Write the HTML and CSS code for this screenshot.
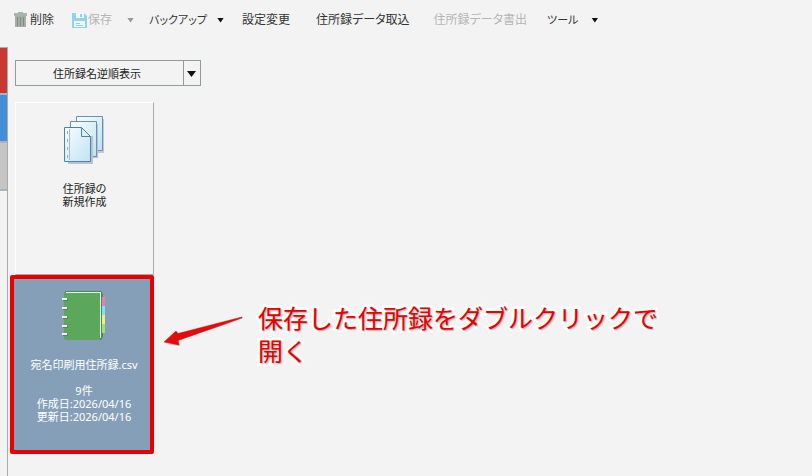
FILE: index.html
```html
<!DOCTYPE html>
<html lang="ja">
<head>
<meta charset="utf-8">
<title>住所録</title>
<link rel="stylesheet" href="styles.css">
</head>
<body>
<div class="app">
  <header class="toolbar">
    <button class="tool tool-delete" type="button">
      <svg class="icon-trash" viewBox="0 0 14 16" aria-hidden="true">
        <path d="M0 1h4V0h5v1h4v3H0z" fill="#a9b5aa"/>
        <path d="M1 4h11v11H1z" fill="#a3aea4"/>
        <path d="M3.500 5v9M6.500 5v9M9.500 5v9" stroke="#7f8b83" stroke-width="1"/>
      </svg>
      <span>削除</span>
    </button>
    <button class="tool tool-save" type="button" disabled>
      <svg class="icon-save" viewBox="0 0 15 15" aria-hidden="true">
        <path d="M0 0h12l3 3v12H0z" fill="#8fd4ea"/>
        <path d="M4 0h8v5H4zM2 8h11v6H2z" fill="#f3f8f9"/>
        <path d="M8 1h2v3H8zM4 10h4v1H4zM4 12h7v1H4z" fill="#8fd4ea"/>
      </svg>
      <span>保存</span>
    </button>
    <button class="drop drop-save" type="button" disabled aria-label="保存メニュー"></button>
    <button class="tool tool-kana tool-backup" type="button">バックアップ</button>
    <button class="drop drop-backup" type="button" aria-label="バックアップメニュー"></button>
    <button class="tool tool-settings" type="button">設定変更</button>
    <button class="tool tool-import" type="button">住所録データ取込</button>
    <button class="tool tool-export" type="button" disabled>住所録データ書出</button>
    <button class="tool tool-kana tool-tools" type="button">ツール</button>
    <button class="drop drop-tools" type="button" aria-label="ツールメニュー"></button>
  </header>
  <div class="body">
    <nav class="rail" aria-label="タブ">
      <span class="tab tab-red"></span>
      <span class="tab tab-blue"></span>
      <span class="tab tab-gray"></span>
    </nav>
    <main class="content">
      <div class="sort">
        <select class="sort-select" aria-label="並び順">
          <option>住所録名逆順表示</option>
        </select>
      </div>
      <div class="board">
        <div class="cards">
          <button class="card card-new" type="button">
            <svg class="icon-pages" viewBox="0 0 42 50" aria-hidden="true">
              <defs>
                <linearGradient id="paper" x1="0" y1="0" x2="1" y2="1">
                  <stop offset="0" stop-color="#fafdff"/>
                  <stop offset="1" stop-color="#bfe2f2"/>
                </linearGradient>
              </defs>
              <path d="M15 3h25v34H15z" fill="#c4cace"/>
              <path d="M12.500 .5h26v34h-26z" fill="url(#paper)" stroke="#6591ba"/>
              <path d="M9 8h25v34H9z" fill="#b5c4cf"/>
              <path d="M6.500 5.500h26v35h-26z" fill="url(#paper)" stroke="#6591ba"/>
              <path d="M4 20h25v28H4z" fill="#b5c4cf"/>
              <path d="M.5 11.500h17l9 9v25H.5z" fill="url(#paper)" stroke="#4f80b4"/>
              <path d="M17.500 11.500v9h9z" fill="#d9f0fa" stroke="#4f80b4"/>
              <path d="M5.500 13v31" stroke="#9dbbd6"/>
              <path d="M3.500 15v29" stroke="#8fb0cf" stroke-dasharray="3 5"/>
            </svg>
            <span class="card-text">住所録の<br>新規作成</span>
          </button>
          <button class="card card-book" type="button">
            <svg class="icon-book" viewBox="0 0 44 50" aria-hidden="true">
              <path d="M4 0h35l2 3v43l-2 3H4l-2-2V2z" fill="#458c50"/>
              <path d="M4 1h35v46H4z" fill="#edf5e9"/>
              <path d="M4 2h34v47H4l-2-2V2z" fill="#5ba75c"/>
              <path d="M40 6h3v9h-3z" fill="#f17aae"/>
              <path d="M40 15h3v9h-3z" fill="#7be2fa"/>
              <path d="M40 24h3v9h-3z" fill="#f5ed79"/>
              <path d="M40 33h3v9h-3z" fill="#a7dd78"/>
              <path d="M1 9h5M1 18h5M1 27h5M1 36h5M1 44h5" stroke="#69756c" stroke-width="2"/>
              <path d="M0 8h5M0 17h5M0 26h5M0 35h5M0 43h5" stroke="#f0f0ea" stroke-width="2"/>
            </svg>
            <span class="card-text">宛名印刷用住所録.csv<br><br>9件<br>作成日:2026/04/16<br>更新日:2026/04/16</span>
          </button>
        </div>
        <div class="note">
          <svg class="note-arrow" viewBox="0 0 82 34" aria-hidden="true">
            <path d="M80 3L16 21l1 9L3 28z" fill="#999" opacity=".5"/>
            <path d="M79 1L15 17.500 13 15 1 26l15 3-1-4.500L79 2z" fill="#e60b0b" stroke="#b51717" stroke-width=".5"/>
          </svg>
          <p class="note-text">保存した住所録をダブルクリックで<br>開く</p>
        </div>
      </div>
    </main>
  </div>
</div>
</body>
</html>
```
FILE: styles.css
```css
* {
  box-sizing: border-box;
}

body {
  margin: 0;
  background: #f3f3f3;
  color: #333;
  font-family: "Noto Sans", "Noto Sans CJK JP", sans-serif;
  font-size: 12px;
}

button,
select {
  margin: 0;
  padding: 0;
  border: 0;
  background: none;
  color: inherit;
  font: inherit;
}

.app {
  display: flex;
  flex-direction: column;
  min-height: 100vh;
}

.toolbar {
  display: flex;
  align-items: center;
  height: 47px;
  padding: 0 14px 7px;
  line-height: 16px;
}

.tool {
  display: flex;
  align-items: center;
  white-space: nowrap;
  font-feature-settings: "palt";
}

.tool-kana {
  font-size: 11px;
}

.tool:disabled {
  color: #b5b5b5;
}

.icon-trash {
  width: 14px;
  height: 16px;
  margin-right: 2px;
}

.icon-save {
  width: 15px;
  height: 15px;
  margin-right: 1px;
}

.drop {
  width: 7px;
  height: 5px;
  background: #111;
  clip-path: polygon(0 0, 100% 0, 50% 100%);
}

.drop:disabled {
  background: #999;
}

.tool-save {
  margin-left: 18px;
}

.drop-save,
.tool-backup {
  margin-left: 15px;
}

.drop-backup {
  margin-left: 10px;
}

.tool-settings {
  margin-left: 18px;
}

.tool-import {
  margin-left: 26px;
}

.tool-export {
  margin-left: 24px;
}

.tool-tools {
  margin-left: 20px;
}

.drop-tools {
  margin-left: 13px;
}

.body {
  display: flex;
  flex: 1;
}

.rail {
  width: 8px;
  border-right: 1px solid #aaa;
}

.tab {
  display: block;
  height: 48px;
  border-bottom: 2px solid #a9b4c0;
}

.tab-red {
  background: #cb3731;
  border-top: 1px solid #aaa;
}

.tab-blue {
  background: #438edb;
}

.tab-gray {
  background: #c5c5c5;
}

.content {
  flex: 1;
  padding: 13px 7px 0;
}

.sort {
  position: relative;
  width: 186px;
  height: 26px;
  border: 1px solid #929b94;
}

.sort::before {
  content: "";
  position: absolute;
  top: 0;
  right: 16px;
  width: 1px;
  height: 100%;
  background: #929b94;
}

.sort::after {
  content: "";
  position: absolute;
  top: 10px;
  right: 4px;
  width: 9px;
  height: 6px;
  background: #111;
  clip-path: polygon(0 0, 100% 0, 50% 100%);
  pointer-events: none;
}

.sort-select {
  width: 100%;
  height: 100%;
  padding-right: 22px;
  appearance: none;
  color: #222;
  font-size: 11px;
  text-align: center;
  text-align-last: center;
}

.board {
  display: flex;
  align-items: flex-start;
  margin-top: 16px;
}

.cards {
  width: 139px;
}

.card {
  display: flex;
  flex-direction: column;
  align-items: center;
  width: 100%;
  font-size: 11px;
  line-height: 13px;
}

.card-new {
  height: 173px;
  padding-top: 13px;
  border: 1px solid #fff;
  border-right-color: #aaa;
  border-bottom-color: #aaa;
  color: #222;
}

.icon-pages {
  width: 42px;
  height: 50px;
  margin-bottom: 16px;
}

.card-text {
  font-feature-settings: "palt";
}

.card-book {
  width: 144px;
  height: 179px;
  margin-left: -5px;
  padding: 12px 0 0 4px;
  border: 4px solid #e60000;
  border-radius: 2px;
  background: #869fb8;
  color: #fff;
}

.icon-book {
  width: 44px;
  height: 50px;
  margin-bottom: 17px;
}

.note {
  display: flex;
  align-items: flex-start;
  margin: 199px 0 0 9px;
}

.note-arrow {
  flex: none;
  width: 82px;
  height: 34px;
  margin-top: 15px;
}

.note-text {
  margin: 0 0 0 13px;
  color: #e60000;
  font-family: "Noto Sans CJK JP", sans-serif;
  font-size: 25px;
  line-height: 33px;
  white-space: nowrap;
  -webkit-text-stroke: 5px #fff;
  paint-order: stroke fill;
  text-shadow: 1px 1px 2px #999;
}
```
